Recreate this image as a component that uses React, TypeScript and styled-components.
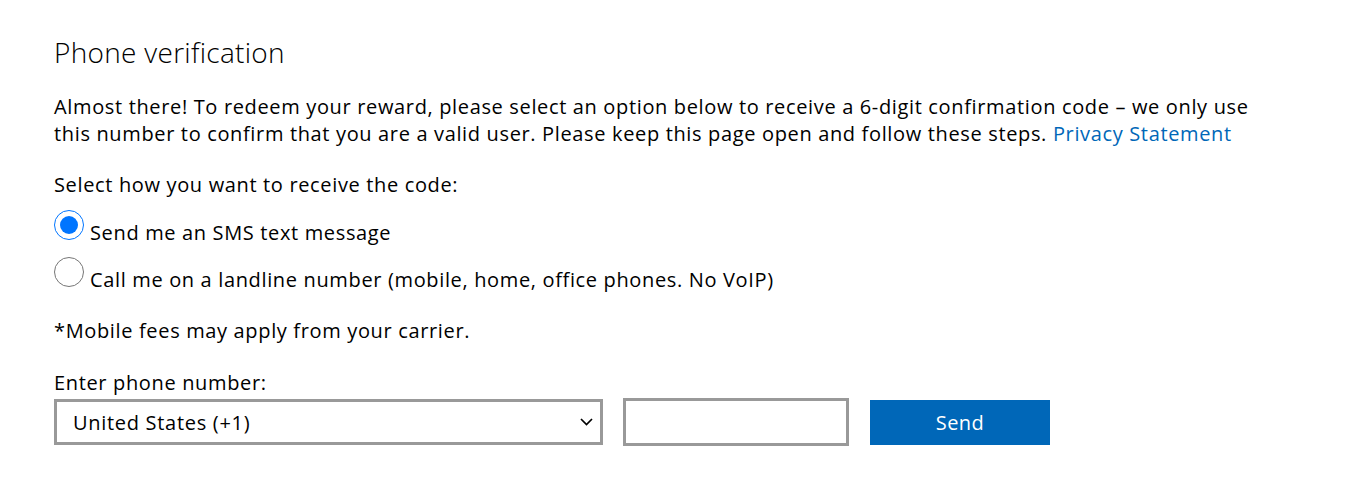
import React from "react";
import styled, { createGlobalStyle } from "styled-components";

const Global = createGlobalStyle`
  html, body { margin: 0; padding: 0; background: #fff; }
  body { font-family: "Open Sans", "Noto Sans", sans-serif; color: #000; }
`;

const Page = styled.div`
  padding: 34px 0 0 54px;
`;

const Title = styled.h1`
  margin: 0;
  font-size: 28px;
  font-weight: 300;
  line-height: 36px;
  letter-spacing: 0.3px;
  color: #000;
`;

const Text = styled.p<{ $top: number }>`
  margin: ${(p) => p.$top}px 0 0;
  font-size: 20px;
  line-height: 27px;
  letter-spacing: 0.65px;
`;

const Link = styled.a`
  color: #0067b8;
  text-decoration: none;
`;

const Options = styled.div`
  display: flex;
  flex-direction: column;
  gap: 11px;
  margin-top: 12px;
`;

const Option = styled.label`
  display: flex;
  align-items: flex-end;
  gap: 6px;
  font-size: 20px;
  line-height: 27px;
  letter-spacing: 0.65px;
`;

const Radio = styled.input`
  width: 30px;
  height: 30px;
  margin: 0 0 6px;
  accent-color: #0075ff;
  flex: none;
`;

const Controls = styled.div`
  display: flex;
  align-items: center;
  margin-top: 2px;
`;

const SelectBox = styled.div`
  position: relative;
  width: 549px;
  height: 46px;
  box-sizing: border-box;
  border: 3px solid #999;
  display: flex;
  align-items: center;
  padding-left: 16px;
  font-size: 20px;
  letter-spacing: 0.7px;
`;

const Chevron = styled.svg`
  position: absolute;
  right: 7px;
  top: 50%;
  transform: translateY(-50%);
`;

const Input = styled.input`
  width: 226px;
  height: 48px;
  margin-left: 20px;
  box-sizing: border-box;
  border: 3px solid #999;
  font-size: 20px;
  padding: 0 10px;
  outline: none;
`;

const Button = styled.button`
  width: 180px;
  height: 45px;
  margin-left: 21px;
  border: none;
  background: #0067b8;
  color: #fff;
  font-family: inherit;
  font-size: 20px;
  letter-spacing: 0.4px;
`;

export default function App() {
  return (
    <>
      <Global />
      <Page>
        <Title>Phone verification</Title>
        <Text $top={23}>
          Almost there! To redeem your reward, please select an option below to receive a 6-digit confirmation code – we only use
          <br />
          this number to confirm that you are a valid user. Please keep this page open and follow these steps.{" "}
          <Link href="#">Privacy Statement</Link>
        </Text>
        <Text $top={24}>Select how you want to receive the code:</Text>
        <Options>
          <Option>
            <Radio type="radio" name="m" defaultChecked />
            Send me an SMS text message
          </Option>
          <Option>
            <Radio type="radio" name="m" />
            Call me on a landline number (mobile, home, office phones. No VoIP)
          </Option>
        </Options>
        <Text $top={24}>*Mobile fees may apply from your carrier.</Text>
        <Text $top={25}>Enter phone number:</Text>
        <Controls>
          <SelectBox>
            United States (+1)
            <Chevron width="13" height="8" viewBox="0 0 13 8">
              <path d="M1 1 L6.5 6.5 L12 1" fill="none" stroke="#000" strokeWidth="1.7" />
            </Chevron>
          </SelectBox>
          <Input type="text" />
          <Button>Send</Button>
        </Controls>
      </Page>
    </>
  );
}
